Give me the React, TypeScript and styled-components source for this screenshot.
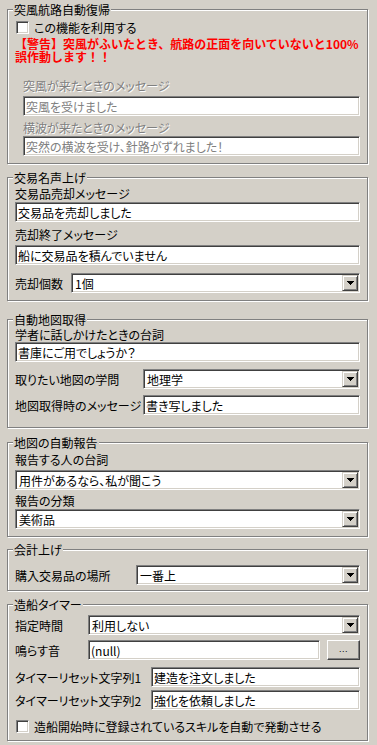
import React from "react";
import styled, { createGlobalStyle, css } from "styled-components";

const GlobalStyle = createGlobalStyle`
  html, body {
    margin: 0;
    background: #d4d0c8;
  }
  body {
    font-family: "Noto Sans CJK JP", "Noto Sans", sans-serif;
    font-size: 12px;
    line-height: 13px;
    color: #000;
    font-feature-settings: "palt";
  }
`;

// classic win32 sunken edge (edit, combo, checkbox)
const sunken = css`
  box-sizing: border-box;
  border: 1px solid;
  border-color: #808080 #fff #fff #808080;
  box-shadow: inset 1px 1px 0 #404040, inset -1px -1px 0 #d4d0c8;
  background: #fff;
`;

const raised = css`
  box-sizing: border-box;
  border: 1px solid;
  border-color: #fff #404040 #404040 #fff;
  box-shadow: inset -1px -1px 0 #808080;
  background: #d4d0c8;
`;

const Page = styled.div`
  display: flex;
  flex-direction: column;
  padding: 9px 9px 0 7px;
  width: 377px;
  height: 745px;
  box-sizing: border-box;
`;

const Group = styled.div<{ $mt?: number; $pt: number; $pb: number }>`
  position: relative;
  margin-top: ${(p) => p.$mt ?? 0}px;
  padding: ${(p) => p.$pt}px 7px ${(p) => p.$pb}px;
  border: 1px solid #808080;
  box-shadow: 1px 1px 0 #fff, inset 1px 1px 0 #fff;
  display: flex;
  flex-direction: column;
`;

const Legend = styled.span`
  position: absolute;
  top: -7px;
  left: 5px;
  padding: 0 1px;
  background: #d4d0c8;
  line-height: 13px;
  white-space: nowrap;
`;

const CheckRow = styled.label<{ $mt?: number }>`
  display: flex;
  align-items: center;
  gap: 5px;
  margin-top: ${(p) => p.$mt ?? 0}px;
  padding-left: 1px;
  height: 13px;
`;

const CheckBox = styled.span`
  ${sunken};
  display: inline-block;
  width: 13px;
  height: 13px;
  flex: none;
`;

const Warning = styled.div`
  margin-top: 3px;
  color: #ff0000;
  font-weight: bold;
  font-feature-settings: normal;
  white-space: nowrap;
`;

const Indent = styled.div`
  display: flex;
  flex-direction: column;
  padding-left: 8px;
`;

const Label = styled.div<{ $mt?: number; $mb?: number; $disabled?: boolean }>`
  margin-top: ${(p) => p.$mt ?? 0}px;
  margin-bottom: ${(p) => p.$mb ?? 2}px;
  white-space: nowrap;
  ${(p) =>
    p.$disabled &&
    css`
      color: #808080;
      text-shadow: 1px 1px 0 #fff;
    `}
`;

const TextBox = styled.input<{ $disabled?: boolean }>`
  ${sunken};
  display: block;
  flex: 1 1 auto;
  width: 100%;
  min-width: 0;
  height: 20px;
  margin: 0;
  padding: 0 0 0 2px;
  font: inherit;
  font-feature-settings: "palt";
  line-height: 16px;
  color: ${(p) => (p.$disabled ? "#808080" : "#000")};
  outline: none;
`;

const Row = styled.div<{ $mt?: number }>`
  display: flex;
  align-items: center;
  margin-top: ${(p) => p.$mt ?? 0}px;
`;

const RowLabel = styled.span<{ $w: number }>`
  flex: none;
  width: ${(p) => p.$w}px;
  white-space: nowrap;
`;

const ComboBox = styled.div`
  ${sunken};
  flex: 1 1 auto;
  display: flex;
  align-items: center;
  height: 20px;
  padding: 1px;
`;

const ComboValue = styled.span`
  flex: 1;
  padding-left: 2px;
  white-space: nowrap;
`;

const DropButton = styled.span`
  ${raised};
  border-color: #d4d0c8 #404040 #404040 #d4d0c8;
  box-shadow: inset 1px 1px 0 #fff, inset -1px -1px 0 #808080;
  flex: none;
  width: 16px;
  height: 16px;
  display: flex;
  align-items: center;
  justify-content: center;
`;

const BrowseButton = styled.button`
  ${raised};
  flex: none;
  width: 33px;
  height: 20px;
  margin-left: 7px;
  padding: 0 0 2px;
  font: 9px "Liberation Sans", sans-serif;
  color: #000;
  letter-spacing: 0.5px;
`;

function Combo({ value }: { value: string }) {
  return (
    <ComboBox>
      <ComboValue>{value}</ComboValue>
      <DropButton>
        <svg width="7" height="4" viewBox="0 0 7 4" shapeRendering="crispEdges">
          <path d="M0 0h7v1h-1v1h-1v1h-1v1h-1v-1h-1v-1h-1v-1h-1z" fill="#000" />
        </svg>
      </DropButton>
    </ComboBox>
  );
}

export default function App() {
  return (
    <>
      <GlobalStyle />
      <Page>
        <Group $pt={11} $pb={7}>
          <Legend>突風航路自動復帰</Legend>
          <CheckRow>
            <CheckBox />
            この機能を利用する
          </CheckRow>
          <Warning>
            【警告】突風がふいたとき、航路の正面を向いていないと100%
            <br />
            誤作動します！！
          </Warning>
          <Indent>
            <Label $mt={16} $mb={4} $disabled>
              突風が来たときのメッセージ
            </Label>
            <TextBox $disabled readOnly value="突風を受けました" />
            <Label $mt={5} $mb={2} $disabled>
              横波が来たときのメッセージ
            </Label>
            <TextBox $disabled readOnly value="突然の横波を受け、針路がずれました！" />
          </Indent>
        </Group>

        <Group $mt={13} $pt={9} $pb={7}>
          <Legend>交易名声上げ</Legend>
          <Label $mb={2}>交易品売却メッセージ</Label>
          <TextBox readOnly value="交易品を売却しました" />
          <Label $mt={6} $mb={4}>売却終了メッセージ</Label>
          <TextBox readOnly value="船に交易品を積んでいません" />
          <Row $mt={8}>
            <RowLabel $w={56}>売却個数</RowLabel>
            <Combo value="1個" />
          </Row>
        </Group>

        <Group $mt={18} $pt={8} $pb={12}>
          <Legend>自動地図取得</Legend>
          <Label $mb={1}>学者に話しかけたときの台詞</Label>
          <TextBox readOnly value="書庫にご用でしょうか？" />
          <Row $mt={7}>
            <RowLabel $w={128}>取りたい地図の学問</RowLabel>
            <Combo value="地理学" />
          </Row>
          <Row $mt={6}>
            <RowLabel $w={128}>地図取得時のメッセージ</RowLabel>
            <TextBox readOnly value="書き写しました" />
          </Row>
        </Group>

        <Group $mt={14} $pt={10} $pb={7}>
          <Legend>地図の自動報告</Legend>
          <Label $mb={4}>報告する人の台詞</Label>
          <Combo value="用件があるなら、私が聞こう" />
          <Label $mt={4} $mb={2}>報告の分類</Label>
          <Combo value="美術品" />
        </Group>

        <Group $mt={12} $pt={15} $pb={5}>
          <Legend>会計上げ</Legend>
          <Row>
            <RowLabel $w={121}>購入交易品の場所</RowLabel>
            <Combo value="一番上" />
          </Row>
        </Group>

        <Group $mt={13} $pt={10} $pb={7}>
          <Legend>造船タイマー</Legend>
          <Row>
            <RowLabel $w={73}>指定時間</RowLabel>
            <Combo value="利用しない" />
          </Row>
          <Row $mt={5}>
            <RowLabel $w={73}>鳴らす音</RowLabel>
            <TextBox readOnly value="(null)" />
            <BrowseButton>...</BrowseButton>
          </Row>
          <Row $mt={7}>
            <RowLabel $w={136}>タイマーリセット文字列1</RowLabel>
            <TextBox readOnly value="建造を注文しました" />
          </Row>
          <Row $mt={3}>
            <RowLabel $w={136}>タイマーリセット文字列2</RowLabel>
            <TextBox readOnly value="強化を依頼しました" />
          </Row>
          <CheckRow $mt={10}>
            <CheckBox />
            造船開始時に登録されているスキルを自動で発動させる
          </CheckRow>
        </Group>
      </Page>
    </>
  );
}
